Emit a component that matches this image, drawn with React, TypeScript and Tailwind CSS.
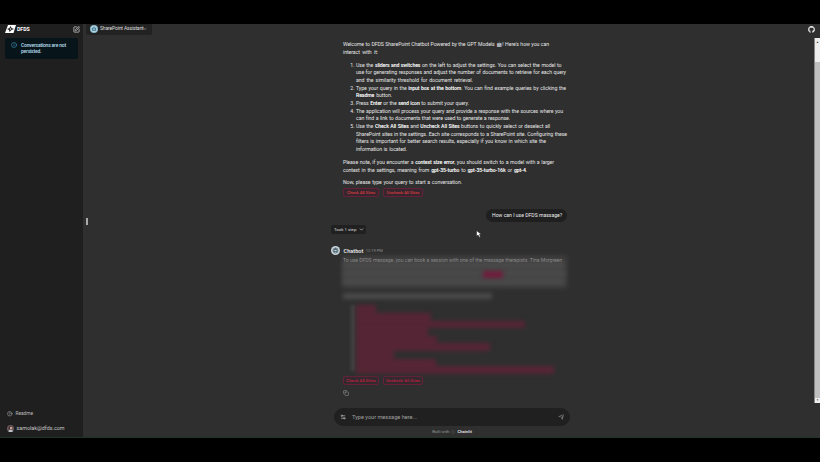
import React from "react";
import { SquarePen, Info, ChevronDown, CircleHelp, Copy, Settings2 } from "lucide-react";
import { FaGithub } from "react-icons/fa";

function Line({ w, children }: { w: number; children: React.ReactNode }) {
  return (
    <div className="h-[7.68px] whitespace-nowrap [text-align-last:justify]" style={{ width: w }}>
      {children}
    </div>
  );
}

function Item({ n, children }: { n: number; children: React.ReactNode }) {
  return (
    <li className="flex">
      <span className="w-[13px] shrink-0 pr-[1.5px] text-right">{n}.</span>
      <div>{children}</div>
    </li>
  );
}

const B = ({ children }: { children: React.ReactNode }) => (
  <b className="font-semibold tracking-[-0.14px] text-white">{children}</b>
);

function SiteButtons({ dim = false }: { dim?: boolean }) {
  const tone = dim ? "border-[#66203a] bg-[#332a2e] text-[#c01c44]" : "border-[#66203a] bg-[#38262e] text-[#d23a40]";
  return (
    <div className="flex gap-[4px] text-[4.4px] leading-[7px] font-medium">
      <div className={"h-[9px] w-[36px] rounded-[2px] border text-center whitespace-nowrap " + tone}>Check All Sites</div>
      <div className={"h-[9px] w-[40px] rounded-[2px] border text-center whitespace-nowrap " + tone}>Uncheck All Sites</div>
    </div>
  );
}

const links = [20, 75, 169, 72, 81, 134, 38, 80, 198];
const haze = [221, 222, 221];

function Sidebar() {
  return (
    <aside className="flex w-[83px] shrink-0 flex-col bg-[#1f1f1f]">
      <div className="flex h-[14px] items-center pr-[3.5px] pb-[4px] pl-[5px]">
        <svg className="h-[8px] w-[11px]" viewBox="0 0 22 16">
          <path d="M6 0H22L17 16H0Z" fill="#fff" />
          <path d="M11 2L13 6L18 8L13 10L9 14L8 10L4 8L9 6Z" fill="#222" />
          <circle cx="11" cy="8" r="1.4" fill="#fff" />
        </svg>
        <span className="ml-px text-[5.2px] leading-[8px] font-bold text-white">DFDS</span>
        <SquarePen className="ml-auto h-[7px] w-[7px] text-[#ddd]" strokeWidth={2.4} />
      </div>
      <div className="ml-[5px] flex h-[21px] w-[73px] rounded-[2px] bg-[#07151b] pt-[3.5px] pl-[5.5px] text-[#b8dfef]">
        <Info className="h-[6px] w-[6px] text-[#4aa5cf]" strokeWidth={2} />
        <div className="ml-[4.5px] text-[5px] leading-[6.6px] font-medium tracking-[-0.2px]">
          <div className="w-[43.5px] whitespace-nowrap [text-align-last:justify]">Conversations are not</div>
          <div>persisted.</div>
        </div>
      </div>
      <div className="mt-auto flex h-[10px] items-center pl-[7px] text-[4.8px] text-[#bbb]">
        <CircleHelp className="mr-[3px] h-[5.5px] w-[5.5px]" />
        Readme
      </div>
      <div className="mb-[4px] flex h-[10px] items-center pl-[7px] mt-[4px] text-[5.4px] text-[#c5c5c5]">
        <svg className="mr-[2.5px] h-[7px] w-[7px]" viewBox="0 0 14 14">
          <circle cx="7" cy="7" r="7" fill="#6d5b5d" />
          <path d="M3 5Q7 -1 11 5L10 9H4Z" fill="#33262b" />
          <circle cx="8" cy="6" r="2.5" fill="#d0a493" />
          <path d="M3 14Q3 9 7 9T12 13L9 14Z" fill="#bec1c6" />
        </svg>
        samolak@dfds.com
      </div>
    </aside>
  );
}

function Welcome() {
  return (
    <div className="ml-[12px] text-[5.2px] leading-[7.68px] tracking-[-0.08px] text-[#e6e6e6]">
      <Line w={206}>Welcome to DFDS SharePoint Chatbot Powered by the GPT Models 🤖! Here's how you can</Line>
      <Line w={35}>interact with it:</Line>
      <ol className="mt-[5.3px]">
        <Item n={1}>
          <Line w={205.5}>Use the <B>sliders and switches</B> on the left to adjust the settings. You can select the model to</Line>
          <Line w={210}>use for generating responses and adjust the number of documents to retrieve for each query</Line>
          <Line w={117}>and the similarity threshold for document retrieval.</Line>
        </Item>
        <Item n={2}>
          <Line w={210}>Type your query in the <B>input box at the bottom</B>. You can find example queries by clicking the</Line>
          <Line w={36}><B>Readme</B> button.</Line>
        </Item>
        <Item n={3}><Line w={113}>Press <B>Enter</B> or the <B>send icon</B> to submit your query.</Line></Item>
        <Item n={4}>
          <Line w={207}>The application will process your query and provide a response with the sources where you</Line>
          <Line w={154}>can find a link to documents that were used to generate a response.</Line>
        </Item>
        <Item n={5}>
          <Line w={194}>Use the <B>Check All Sites</B> and <B>Uncheck All Sites</B> buttons to quickly select or deselect all</Line>
          <Line w={211}>SharePoint sites in the settings. Each site corresponds to a SharePoint site. Configuring these</Line>
          <Line w={190}>filters is important for better search results, especially if you know in which site the</Line>
          <Line w={51}>information is located.</Line>
        </Item>
      </ol>
      <div className="mt-[5.2px]">
        <Line w={211}>Please note, if you encounter a <B>context size error</B>, you should switch to a model with a larger</Line>
        <Line w={184}>context in the settings, meaning from <B>gpt-35-turbo</B> to <B>gpt-35-turbo-16k</B> or <B>gpt-4</B>.</Line>
      </div>
      <div className="mt-[5.2px]"><Line w={119}>Now, please type your query to start a conversation.</Line></div>
      <div className="mt-[1px]"><SiteButtons /></div>
    </div>
  );
}

function Answer() {
  return (
    <div className="mt-[12px]">
      <div className="flex h-[9px] items-center">
        <svg className="h-[9px] w-[9px]" viewBox="0 0 18 18">
          <circle cx="9" cy="9" r="9" fill="#c7d3d8" />
          <circle cx="9" cy="9" r="5" fill="none" stroke="#46606d" strokeWidth="1.6" />
          <path d="M6 7h6v4H6zM9 4v3" fill="none" stroke="#334b57" strokeWidth="1.4" />
        </svg>
        <b className="ml-[3.5px] text-[5.6px] font-semibold text-[#eee]">Chatbot</b>
        <span className="ml-[2.5px] text-[4px] text-[#909090]">12:19 PM</span>
      </div>
      <div className="relative ml-[12px] h-[120.5px] text-[5.1px] leading-[8px] tracking-[-0.07px]">
        <div className="absolute top-[1px] -left-px h-[32px] w-[225px] bg-[#414141] blur-[2.5px]" />
        <div className="relative w-[219px] pt-[0.5px] whitespace-nowrap text-[#929292] [text-align-last:justify]">To use DFDS massage, you can book a session with one of the massage therapists. Tina Morgreen</div>
        <div className="relative -mt-px blur-[2px]">
          {haze.map((w, i) => <div key={i} className="mb-[3px] h-[5px] bg-[#4c4c4c]" style={{ width: w }} />)}
        </div>
        <div className="absolute top-[16px] left-[140px] h-[7px] w-[20px] bg-[#701c3c] blur-[2px]" />
        <div className="absolute top-[38px] left-0 h-[6px] w-[149px] bg-[#4b4b4b] blur-[2.3px]" />
        <div className="absolute top-[50px] left-[8px] h-[66px] w-[4px] bg-[#444] blur-[1.8px]" />
        <div className="absolute top-[50px] left-[13px] blur-[2.3px]">
          {links.map((w, i) => <div key={i} className="h-[7.6px] border-b border-[#4c2834] bg-[#572535]" style={{ width: w }} />)}
        </div>
      </div>
      <div className="ml-[12px]"><SiteButtons dim /></div>
      <Copy className="mt-[5px] ml-[12px] h-[6px] w-[6px] text-[#9a9a9a]" strokeWidth={2} />
    </div>
  );
}

export default function App() {
  return (
    <div className="flex h-[462px] w-[820px] flex-col overflow-hidden bg-black py-[24px] font-[Roboto,'Liberation_Sans',sans-serif]">
      <div className="flex h-[414px] border-b border-[#203525]">
        <Sidebar />
        <main className="relative flex grow flex-col bg-[#2f2f2f]">
          <header className="flex h-[14px] shrink-0 items-start justify-between pr-[5px] pl-[3px]">
            <div className="flex h-[11px] w-[66px] items-center rounded-b-[2px] bg-[#222] pb-px pl-[4px] text-[5px] tracking-[-0.15px] text-[#ddd]">
              <svg className="mr-[2px] h-[8px] w-[8px] shrink-0" viewBox="0 0 16 16">
                <circle cx="8" cy="8" r="8" fill="#8cbcd0" />
                <circle cx="8" cy="8" r="5" fill="none" stroke="#d9edf4" strokeWidth="1.5" />
                <path d="M5 6h6v5H5zM8 3v3M3 8h2M11 8h2" stroke="#356579" strokeWidth="1.3" fill="none" />
              </svg>
              <span className="w-[42px] shrink-0 whitespace-nowrap [text-align-last:justify]">SharePoint Assistant</span>
              <ChevronDown className="ml-px h-[4px] w-[4px] shrink-0" strokeWidth={3} />
            </div>
            <FaGithub className="mt-[1.5px] h-[7px] w-[7px] text-[#eee]" />
          </header>
          <div className="flex h-[365px] shrink-0 justify-between">
            <div className="ml-[248px] w-[240px] pt-[3px]">
              <Welcome />
              <div className="mt-[12.3px] flex h-[13px] w-[236px] justify-end">
                <div className="flex h-[13px] w-[81px] items-center justify-center rounded-full bg-[#1f1f1f] text-[5.1px] whitespace-nowrap text-[#eee]">
                  <span className="w-[69px] [text-align-last:justify]">How can I use DFDS massage?</span>
                </div>
              </div>
              <div className="mt-[3px] flex h-[9px] w-[35px] items-center rounded-[2px] bg-[#202020] pl-[3px] text-[4.3px] whitespace-nowrap text-[#ddd]">
                Took 1 step <ChevronDown className="ml-[3px] h-[5px] w-[5px] shrink-0" strokeWidth={3} />
              </div>
              <Answer />
            </div>
            <div className="flex w-[6px] flex-col border-l border-[#888] bg-[#eee]">
              <div className="h-[24px] pt-[3px] text-center text-[3px] leading-[3px] text-[#333]">▲</div>
              <div className="grow bg-[#c0c0c0]" />
              <div className="h-[5px] text-center text-[3px] leading-[5px] text-[#666]">▼</div>
            </div>
          </div>
          <footer className="ml-[251px] w-[236px] pt-[5px]">
            <div className="flex h-[18px] items-center rounded-full bg-[#202020] px-[6px] text-[5.6px] text-[#a0a0a0]">
              <Settings2 className="mr-[6px] h-[6px] w-[6px] text-[#bbb]" strokeWidth={2.5} />
              <span className="w-[64px] whitespace-nowrap [text-align-last:justify]">Type your message here...</span>
              <svg className="ml-auto h-[6px] w-[6px]" viewBox="0 0 12 12"><path d="M0 5L12 0L9 12L6 8L12 0L4 6Z" fill="#777" /></svg>
            </div>
            <div className="mt-[2px] flex h-[8px] items-center justify-center text-[4.2px] text-[#999]">
              Built with
              <svg className="mx-[2px] h-[4px] w-[4px]" viewBox="0 0 8 8"><circle cx="4" cy="4" r="3" fill="none" stroke="#555" /></svg>
              <b className="text-[#ddd]">Chainlit</b>
            </div>
          </footer>
          <div className="absolute top-[194px] left-[3px] h-[7px] w-[2px] bg-[#aaa]" />
          <svg className="absolute top-[206px] left-[393px] h-[8px] w-[6px]" viewBox="0 0 12 16"><path d="M1 1V13L4 10L7 15L9 14L7 9H11Z" fill="#fff" stroke="#111" /></svg>
        </main>
      </div>
    </div>
  );
}
